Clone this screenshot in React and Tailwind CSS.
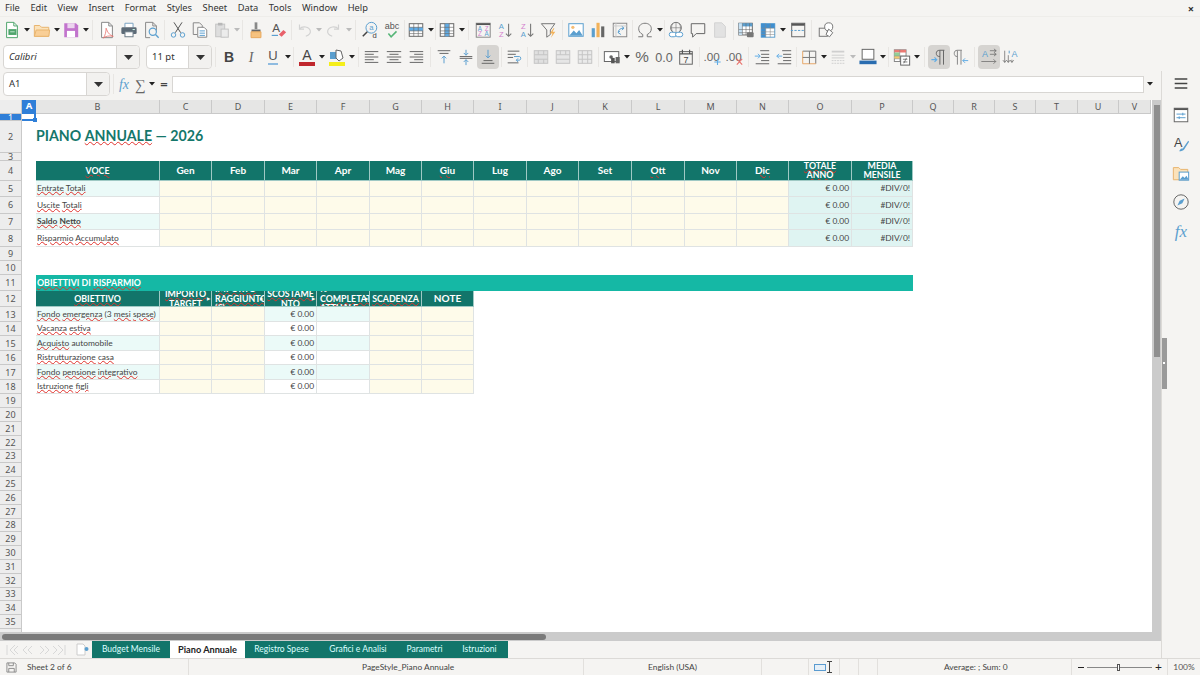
import React from "react";

const S = ({ children, size = "w-[18px] h-[18px]" }) => (
  <svg viewBox="0 0 20 20" className={size} fill="none" strokeWidth="1.1">{children}</svg>
);
const Arrow = () => (
  <svg viewBox="0 0 7 4" className="w-[6px] h-[3.500px] shrink-0"><path d="M0 0h7L3.5 4z" fill="#222" /></svg>
);
const ArrowOff = () => (
  <svg viewBox="0 0 7 4" className="w-[6px] h-[3.500px] shrink-0"><path d="M0 0h7L3.5 4z" fill="#bbb" /></svg>
);
const B = ({ children, active }) => (
  <div className={active ? "w-[22px] h-[24px] shrink-0 flex items-center justify-center rounded bg-[#d6d4d1]" : "w-[22px] h-[24px] shrink-0 flex items-center justify-center"}>{children}</div>
);
const BD = ({ children, off }) => (
  <div className="w-[29.5px] h-[24px] shrink-0 flex items-center">
    <div className="w-[22px] mr-[1px] flex justify-center">{children}</div>
    {off ? <ArrowOff /> : <Arrow />}
  </div>
);
const Sep = ({ className }) => (
  <div className={"flex justify-center shrink-0 " + className}><div className="w-px h-[20px] bg-[#e8e6e3]" /></div>
);
const T = ({ x = 10, y = 14, s = 10, c = "#555", w = "400", i, children }) => (
  <text x={x} y={y} fontSize={s} fill={c} fontWeight={w} fontStyle={i ? "italic" : "normal"} fontFamily="'Liberation Sans', sans-serif" textAnchor="middle">{children}</text>
);

const I = {
  fresh: <S><path d="M4 1.500h8l4 4v13H4z" stroke="#4fa56c" fill="#fff" /><path d="M12 1.500v4h4" stroke="#4fa56c" /><rect x="6" y="9" width="9" height="6.500" fill="#4fa56c" /><path d="M8 12h5" stroke="#bfe6cc" /></S>,
  open: <S><path d="M1.500 5h6l2 2h8v10h-16z" fill="#fbe2ba" stroke="#e8b46e" /><path d="M1.500 17l2-7h15l-1 7z" fill="#f9cf97" stroke="#e8b46e" /></S>,
  save: <S><path d="M2.500 2.500h13l2.500 2.500v13h-15.500z" fill="#c274cd" /><rect x="6" y="2.500" width="8" height="5.500" fill="#ecd5ef" /><rect x="5.500" y="11" width="9" height="7" fill="#fff" /></S>,
  pdf: <S><path d="M4 1.500h8l4 4v13H4z" stroke="#888" fill="#fff" /><path d="M12 1.500v4h4" stroke="#888" /><path d="M9 8c2 5 3 7 8 9-5-1-9 0-11 2 2-3 3-7 3-11z" stroke="#e8736e" strokeWidth=".9" /></S>,
  print: <S><path d="M5.500 7V2.500h9V7" stroke="#7aa3c2" fill="#fff" /><rect x="1.500" y="7" width="17" height="7.500" rx="1.500" fill="#5c6a76" /><rect x="5.500" y="12" width="9" height="5.500" fill="#fff" stroke="#6b7a86" /><path d="M14 9.500h2.500" stroke="#cfe" /></S>,
  preview: <S><path d="M4 1.500h8l4 4v5M9 18.500H4v-17" stroke="#888" /><path d="M12 1.500v4h4" stroke="#888" /><circle cx="12" cy="12" r="4" stroke="#5b9fcf" strokeWidth="1.300" /><path d="M15 15l3.500 3.500" stroke="#5b9fcf" strokeWidth="1.500" /></S>,
  cut: <S><path d="M5.500 1.500L13 13M14.500 1.500L7 13" stroke="#555" /><circle cx="5" cy="15.500" r="2.500" stroke="#5b9fcf" /><circle cx="15" cy="15.500" r="2.500" stroke="#5b9fcf" /></S>,
  copy: <S><path d="M2.500 2h7l3 3v4M7 15H2.500V2" stroke="#888" /><path d="M7.500 7h7l3 3v8h-10z" stroke="#888" fill="#fff" /><path d="M9.500 11h6M9.500 13.500h6M9.500 16h6" stroke="#5b9fcf" /></S>,
  paste: <S><rect x="3" y="3.500" width="10" height="14" fill="#dedede" stroke="#c4c4c4" /><rect x="5.500" y="2" width="5" height="3" fill="#b8b8b8" /><rect x="9" y="9" width="8" height="9" fill="#ececec" stroke="#c4c4c4" /></S>,
  clone: <S><path d="M8.500 1.500h3V9h-3z" fill="#888" /><path d="M5 9.500h10v2.500H5z" fill="#666" /><path d="M4.500 12h11v6.500h-11z" fill="#f6c27f" stroke="#e8a95e" /></S>,
  clear: <S><T x="8" y="12" s="13" c="#555">A</T><path d="M3 16h7" stroke="#5b9fcf" strokeWidth="1.300" /><path d="M11 15l5-5 3 2.500-5 5z" fill="#e8606a" /></S>,
  undo: <S><path d="M5 4v5h5" stroke="#d2d2d2" strokeWidth="1.300" /><path d="M5 9c3-4 11-3 12 2 .5 3-2 5-5 6" stroke="#d2d2d2" strokeWidth="1.300" /></S>,
  redo: <S><path d="M15 4v5h-5" stroke="#d2d2d2" strokeWidth="1.300" /><path d="M15 9c-3-4-11-3-12 2-.5 3 2 5 5 6" stroke="#d2d2d2" strokeWidth="1.300" /></S>,
  find: <S><circle cx="11.500" cy="7.500" r="6" stroke="#5b9fcf" /><T x="11.500" y="10.500" s="8.500" c="#5b9fcf">a</T><path d="M7 12l-5 5" stroke="#444" strokeWidth="1.700" /><T x="15" y="19" s="8.500" c="#444">d</T></S>,
  spell: <S><T x="10" y="9" s="10" c="#555">abc</T><path d="M6 14l3 3.500 6-6" stroke="#55b577" strokeWidth="1.700" /></S>,
  table: <S><rect x="2.500" y="3" width="15" height="14" stroke="#666" fill="#fff" /><rect x="2.500" y="7" width="15" height="4" fill="#62ade6" /><path d="M2.500 7h15M2.500 11h15M2.500 14h15M7.500 3v14M12.500 3v14" stroke="#666" strokeWidth=".7" /></S>,
  tablec: <S><rect x="2.500" y="3" width="15" height="14" stroke="#666" fill="#fff" /><rect x="7.500" y="3" width="5" height="14" fill="#62ade6" /><path d="M2.500 7h15M2.500 11h15M2.500 14h15M7.500 3v14M12.500 3v14" stroke="#666" strokeWidth=".7" /></S>,
  sortBox: <S><rect x="2.500" y="2.500" width="15.500" height="15.500" stroke="#888" /><path d="M2.500 3.500h15.500" stroke="#555" strokeWidth="2" /><T x="6.500" y="11" s="7" c="#5b9fcf">A</T><T x="6.500" y="17" s="7" c="#d47fce">Z</T><T x="14" y="11" s="7" c="#d47fce">Z</T><T x="14" y="17" s="7" c="#5b9fcf">A</T></S>,
  az: <S><T x="6" y="9" s="8.500" c="#5b9fcf">A</T><T x="6" y="18" s="8.500" c="#d47fce">Z</T><path d="M14 3v14M11 14l3 3 3-3" stroke="#777" strokeWidth="1.200" /></S>,
  za: <S><T x="6" y="9" s="8.500" c="#d47fce">Z</T><T x="6" y="18" s="8.500" c="#5b9fcf">A</T><path d="M14 3v14M11 14l3 3 3-3" stroke="#777" strokeWidth="1.200" /></S>,
  filter: <S><path d="M1.500 3h15l-5 7v5l-4 3v-8z" stroke="#777" /><path d="M15 8l-4 6h3l-2 5 5-7h-3l2-4z" fill="#f2b25a" /></S>,
  image: <S><rect x="2" y="3" width="16" height="14" stroke="#5b9fcf" fill="#fff" /><circle cx="6.500" cy="7" r="1.800" fill="#f5bd75" /><path d="M2.500 16.500l5-6 3 3 3-3.500 4 6.500z" fill="#5b9fcf" /></S>,
  chart: <S><rect x="3" y="8" width="3.500" height="10" fill="#5b9fcf" /><rect x="8.300" y="2" width="3.500" height="16" fill="#f2b25a" /><rect x="13.500" y="6" width="3.500" height="12" fill="#666" /></S>,
  pivot: <S><rect x="2.500" y="2.500" width="15" height="15" stroke="#888" /><path d="M2.500 5.500h15M5.500 2.500v15" stroke="#ccc" /><path d="M8 13c0-3 2-5 6-5M12 6l2.500 2L12 10M11 15l-3-2 2-2" stroke="#5b9fcf" /></S>,
  omega: <S><path d="M2.500 17.500h5v-2.500c-3-1.500-4.500-3.500-4.500-6.500 0-3.500 3-6 7-6s7 2.500 7 6c0 3-1.500 5-4.500 6.500v2.500h5" stroke="#777" /></S>,
  link: <S><circle cx="10" cy="7.500" r="6" stroke="#777" /><path d="M4 7.500h12M10 1.500v12M6.500 2.500c-2 3-2 7 0 10M13.500 2.500c2 3 2 7 0 10" stroke="#777" strokeWidth=".7" /><rect x="2.500" y="12.500" width="8" height="5" rx="2.500" stroke="#5b9fcf" fill="#fff" /><rect x="9.500" y="12.500" width="8" height="5" rx="2.500" stroke="#5b9fcf" fill="#fff" /></S>,
  comment: <S><path d="M2.500 3h15v11H8l-4 4v-4H2.500z" stroke="#666" /></S>,
  hdr: <S><path d="M4 2h8l4 4v12H4z" fill="#e2e2e2" stroke="#d2d2d2" /></S>,
  freezeP: <S><rect x="2" y="2.500" width="15" height="13" stroke="#666" fill="#fff" /><rect x="2" y="2.500" width="15" height="3.500" fill="#5b9fcf" /><rect x="2" y="2.500" width="4" height="13" fill="#c8e2f4" /><path d="M2 9.500h15M2 13h15M6 2.500v13M10 2.500v13M14 2.500v13" stroke="#666" strokeWidth=".6" /><rect x="11" y="12.500" width="7.500" height="5.500" rx="1" fill="#777" /></S>,
  freeze: <S><rect x="2.500" y="3" width="15" height="15" stroke="#5b9fcf" fill="#fff" /><rect x="2.500" y="3" width="5" height="15" fill="#3f8fd0" /><rect x="2.500" y="3" width="15" height="5" fill="#3f8fd0" /><path d="M2.500 8h15M2.500 12h15M2.500 15h15M7.500 3v15M12.500 3v15" stroke="#888" strokeWidth=".6" /></S>,
  split: <S><rect x="3" y="2.500" width="14.500" height="15" stroke="#666" /><path d="M3 4h14.500" stroke="#555" strokeWidth="2.500" /><path d="M2 10.500h16" stroke="#5b9fcf" strokeDasharray="2.500 1.500" /></S>,
  shapes: <S><rect x="2.500" y="8" width="9" height="9" stroke="#777" /><circle cx="13" cy="6.500" r="4.500" stroke="#777" fill="#fff" /><path d="M13 9l4.500 4-3.500 4.500-4-2.500z" stroke="#777" fill="#fff" /></S>,
  aLeft: <S><path d="M2 4h15M2 7h10M2 10h15M2 13h10M2 16h15" stroke="#666" /></S>,
  aCenter: <S><path d="M2 4h16M5 7h10M2 10h16M5 13h10M2 16h16" stroke="#666" /></S>,
  aRight: <S><path d="M3 4h15M8 7h10M3 10h15M8 13h10M3 16h15" stroke="#666" /></S>,
  vTop: <S><path d="M3 3h14M5 6h10" stroke="#666" /><path d="M10 17V9M7.500 11.500L10 9l2.500 2.500" stroke="#5b9fcf" /></S>,
  vMid: <S><path d="M3 9.500h14M3 11.500h14" stroke="#666" /><path d="M10 2v6M7.500 5.500L10 8l2.500-2.500M10 19v-6M7.500 15.500L10 13l2.500 2.500" stroke="#5b9fcf" /></S>,
  vBot: <S><path d="M3 17h14M5 14h10" stroke="#666" /><path d="M10 2v9M7.500 8.500L10 11l2.500-2.500" stroke="#5b9fcf" /></S>,
  wrap: <S><path d="M3 3.500h13M3 7h9M3 10.500h6M3 16.500h12" stroke="#666" /><path d="M10 9.500h6c2 0 2 4 0 4h-3M14.500 11.500L12.500 13.500l2 2" stroke="#5b9fcf" /></S>,
  merge1: <S><rect x="2.500" y="3" width="15" height="14" fill="#e0e0e0" stroke="#c4c4c4" /><path d="M2.500 7.500h15M2.500 12.500h15M7 3v4.500M13 3v4.500M7 12.500V17M13 12.500V17" stroke="#c4c4c4" /></S>,
  merge2: <S><rect x="2.500" y="3" width="15" height="14" fill="#e6e6e6" stroke="#c4c4c4" /><path d="M2.500 7.500h15M2.500 12.500h15M7 3v4.500M13 3v4.500" stroke="#c4c4c4" /></S>,
  merge3: <S><rect x="2.500" y="3" width="15" height="14" fill="#eaeaea" stroke="#c4c4c4" /><path d="M2.500 7.500h15M2.500 12.500h15M7 3v14M13 3v14" stroke="#c4c4c4" /></S>,
  curr: <S><rect x="1.500" y="4" width="16" height="11" stroke="#666" fill="#fff" /><circle cx="9" cy="10" r="2" fill="#666" /><rect x="9" y="11" width="4" height="6" fill="#555" /><rect x="14" y="10" width="4.500" height="7" fill="#666" /></S>,
  pct: <S><T x="10" y="16" s="17" c="#666">%</T></S>,
  num: <S><T x="10" y="16" s="14" c="#666">0.0</T></S>,
  date: <S><rect x="3" y="4" width="14" height="14" stroke="#666" /><path d="M3 6.500h14M6 2v4M14 2v4" stroke="#555" strokeWidth="1.300" /><T x="10" y="16.500" s="10" c="#444">7</T></S>,
  addDec: <S><T x="8.500" y="14" s="13" c="#666">.00</T><path d="M15 12v7M11.500 15.500h7" stroke="#62ade6" strokeWidth="1.200" /></S>,
  delDec: <S><T x="8.500" y="14" s="13" c="#666">.00</T><path d="M12 12l6 6.500M18 12l-6 6.500" stroke="#e8706a" strokeWidth="1.200" /></S>,
  indent: <S><path d="M8 3h10M9 7h9M9 10.500h9M9 14h9M3 17.500h15" stroke="#666" /><path d="M2 9h6M5.500 6.500L8 9l-2.500 2.500" stroke="#62ade6" /></S>,
  outdent: <S><path d="M8 3h10M9 7h9M9 10.500h9M9 14h9M3 17.500h15" stroke="#666" /><path d="M8 9H2M4.500 6.500L2 9l2.500 2.500" stroke="#62ade6" /></S>,
  borders: <S><path d="M3 3.500h14.500v14" stroke="#777" /><path d="M3 3.500v14h14.500" stroke="#e8a868" /><path d="M3 10.500h14.500M10.500 3.500v14" stroke="#777" /></S>,
  bstyle: <S><path d="M3 4h14" stroke="#cfcfcf" strokeWidth="2" /><path d="M3 8h14M3 11h14" stroke="#cfcfcf" /><path d="M3 14h14M3 17h14" stroke="#cfcfcf" strokeDasharray="2 1" /></S>,
  bcolor: <S><rect x="3.500" y="1.500" width="13" height="11" stroke="#666" fill="#fff" /><path d="M.500 14h19v4h-19z" fill="#2a6db0" /></S>,
  cond: <S><rect x="1.500" y="2" width="13" height="13" stroke="#888" fill="#fff" /><rect x="1.500" y="2" width="13" height="3" fill="#ea7a74" /><rect x="1.500" y="5" width="6" height="4" fill="#92cf95" /><rect x="1.500" y="9" width="6" height="3" fill="#f4cc70" /><path d="M1.500 9h13M1.500 12h13M7.500 2v13" stroke="#888" strokeWidth=".6" /><rect x="8.500" y="9" width="10" height="10" fill="#fff" stroke="#666" /><path d="M11 12.500h5M11 15.500h5M15 11l-3 6" stroke="#555" strokeWidth=".8" /></S>,
  ltr: <S><path d="M16 2.500H11c-3 0-4 1.500-4 3.500s1 3.500 4 3.500M11 2.500v16M15 2.500v16" stroke="#666" /><path d="M1.500 13h6M5 10.500L7.500 13 5 15.500" stroke="#62ade6" strokeWidth="1.300" /></S>,
  rtl: <S><path d="M11 2.500H6c-2.500 0-3.500 1.500-3.500 3.500S3.500 9.500 6 9.500M6 2.500v16M10 2.500v16" stroke="#888" /><path d="M18 14h-6M14.500 11.500L12 14l2.500 2.500" stroke="#62ade6" strokeWidth="1.100" /></S>,
  txtH: <S><T x="5.500" y="10" s="10" c="#5b9fcf">A</T><path d="M11 3h7M11 7h7M15.500 1l2.500 2-2.500 2M15.500 5l2.500 2-2.500 2M1.500 15h16M15 12.500l2.500 2.500-2.500 2.500" stroke="#666" strokeWidth=".8" /></S>,
  txtV: <S><T x="14" y="10" s="10" c="#5b9fcf">A</T><path d="M3 3v13M7 8v8M11 13v3M1 13.500L3 16l2-2.500M5 13.500L7 16l2-2.500M9 13.500L11 16l2-2.500" stroke="#666" strokeWidth=".8" /><path d="M8 3v3" stroke="#5b9fcf" /></S>,
  menu: <S><path d="M3 4.500h14M3 9.500h14M3 14.500h14" stroke="#444" strokeWidth="1.700" /></S>,
  props: <S><rect x="2.500" y="2.500" width="15" height="15" stroke="#666" fill="#fff" /><path d="M2.500 3.500h15" stroke="#555" strokeWidth="2" /><path d="M5 9h10M5 13h10M12 7.500v3M8 11.500v3" stroke="#5b9fcf" /></S>,
  styles: <S><T x="7" y="13" s="14" c="#444">A</T><path d="M8 18c1-3 3-3 4-3l6-8.500 1 1-5.500 8.500c-1 1-3 2-5.500 2z" fill="#5b9fcf" /></S>,
  gallery: <S><path d="M1.500 4h6l2 2h8v11.500h-16z" fill="#fbe2ba" stroke="#e8b46e" /><rect x="8" y="9" width="10.500" height="9" fill="#fff" stroke="#5b9fcf" /><path d="M8.500 17.500l3.500-4 2 2 2-2.500 2.500 4.500z" fill="#5b9fcf" /></S>,
  nav: <S><circle cx="10" cy="10" r="8" stroke="#666" /><path d="M14 6l-2.500 5.500L6 14l2.500-5.500z" fill="#5b9fcf" /></S>,
};

const Bold = () => <div className="font-['Liberation_Sans'] font-bold text-[14px] text-[#444]">B</div>;

const topItems = (
  <div className="h-[26px] flex items-center pl-[1px] shrink-0">
    <BD>{I.fresh}</BD><BD>{I.open}</BD><BD>{I.save}</BD><Sep className="w-[6.500px]" />
    <B>{I.pdf}</B><B>{I.print}</B><B>{I.preview}</B><Sep className="w-[5px]" />
    <B>{I.cut}</B><B>{I.copy}</B><BD off>{I.paste}</BD><Sep className="w-[4.500px]" />
    <B>{I.clone}</B><B>{I.clear}</B><Sep className="w-[4px]" />
    <BD off>{I.undo}</BD><BD off>{I.redo}</BD><Sep className="w-[7px]" />
    <B>{I.find}</B><B>{I.spell}</B><Sep className="w-[2px]" />
    <BD>{I.table}</BD><Sep className="w-[1.500px]" /><BD>{I.tablec}</BD><Sep className="w-[6px]" />
    <B>{I.sortBox}</B><B>{I.az}</B><B>{I.za}</B><B>{I.filter}</B><Sep className="w-[5px]" />
    <B>{I.image}</B><B>{I.chart}</B><B>{I.pivot}</B><Sep className="w-[3px]" />
    <BD>{I.omega}</BD><Sep className="w-[2px]" /><B>{I.link}</B><B>{I.comment}</B><B>{I.hdr}</B><Sep className="w-[4px]" />
    <B>{I.freezeP}</B><BD>{I.freeze}</BD><B>{I.split}</B><Sep className="w-[6px]" />
    <B>{I.shapes}</B>
  </div>
);

const Combo = ({ text, cls, dd, italic }) => (
  <div className={"h-[24px] shrink-0 flex items-stretch rounded border border-[#d8d6d3] bg-white " + cls}>
    <div className={"flex-1 flex items-center pl-[5px] text-[9.500px] text-[#333] font-['Noto_Sans'] " + (italic ? "italic" : "")}>{text}</div>
    <div className={"flex items-center justify-center border-l border-[#d8d6d3] bg-[#f2f1ef] rounded-r " + dd}>
      <svg viewBox="0 0 9 5" className="w-[9px] h-[5px]"><path d="M0 0h9L4.500 5z" fill="#333" /></svg>
    </div>
  </div>
);

const formatItems = (
  <div className="h-[28px] flex items-center pl-[3px] shrink-0">
    <Combo text="Calibri" italic cls="w-[137px]" dd="w-[23px]" />
    <div className="w-[6px] shrink-0" />
    <Combo text="11 pt" cls="w-[66px]" dd="w-[23px]" />
    <Sep className="w-[6px]" />
    <B><Bold /></B>
    <B><div className="font-['Liberation_Serif'] italic text-[14px] text-[#666]">I</div></B>
    <BD><div className="font-['Liberation_Sans'] text-[13px] text-[#555] border-b-2 border-[#8fbbe0] leading-[14px]">U</div></BD>
    <Sep className="w-[4.500px]" />
    <BD><div className="flex flex-col items-center w-[16px]"><div className="font-['Liberation_Sans'] text-[14px] leading-[14px] text-[#444]">A</div><div className="w-[16px] h-[4px] bg-[#c0272d]" /></div></BD>
    <BD><div className="flex flex-col items-center w-[16px]"><svg viewBox="0 0 16 13" className="w-[16px] h-[13px]"><rect x="1" y="3" width="7" height="7" fill="#5b9fcf" /><path d="M7 1l5 1 2 7-4 3-3-3z" fill="#fff" stroke="#666" /></svg><div className="w-[16px] h-[4px] bg-[#f5ee1a]" /></div></BD>
    <Sep className="w-[6px]" />
    <B>{I.aLeft}</B><B>{I.aCenter}</B><B>{I.aRight}</B><Sep className="w-[6px]" />
    <B>{I.vTop}</B><B>{I.vMid}</B><B active>{I.vBot}</B><Sep className="w-[4px]" />
    <B>{I.wrap}</B><Sep className="w-[5px]" />
    <B>{I.merge1}</B><B>{I.merge2}</B><B>{I.merge3}</B><Sep className="w-[5px]" />
    <BD>{I.curr}</BD>
    <B>{I.pct}</B><B>{I.num}</B><B>{I.date}</B><Sep className="w-[5px]" />
    <B>{I.addDec}</B><B>{I.delDec}</B><Sep className="w-[5px]" />
    <B>{I.indent}</B><B>{I.outdent}</B><Sep className="w-[3px]" />
    <BD>{I.borders}</BD><BD off>{I.bstyle}</BD><BD>{I.bcolor}</BD><Sep className="w-[5px]" />
    <BD>{I.cond}</BD><Sep className="w-[7px]" />
    <B active>{I.ltr}</B><B>{I.rtl}</B><Sep className="w-[6px]" />
    <B active>{I.txtH}</B><B>{I.txtV}</B>
  </div>
);

const W = ({ children }) => <span className="underline decoration-wavy decoration-[#e0322c] decoration-1 underline-offset-[0px]">{children}</span>;

const colNames = ["B", "C", "D", "E", "F", "G", "H", "I", "J", "K", "L", "M", "N", "O", "P", "Q", "R", "S", "T", "U", "V"];
const RH = ({ n, active }) => (
  <div className={active
    ? "col-start-1 flex items-center justify-center bg-[#2f7fd8] text-white text-[9px] leading-none border-b border-r border-[#c9c9c9] overflow-hidden font-['Noto_Sans']"
    : "col-start-1 flex items-center justify-center bg-[#ededed] text-[#555] text-[9px] leading-none border-b border-r border-[#c9c9c9] overflow-hidden font-['Noto_Sans']"}>{n}</div>
);
const HC = ({ children, cls = "" }) => (
  <div className={"relative overflow-hidden flex flex-col items-center justify-center text-center bg-[#12756a] text-white font-bold text-[8.800px] leading-[9.500px] border-r border-b border-[#9fc9c4] font-['Lato'] " + cls}>{children}</div>
);
const cx = "flex items-center border-r border-b border-[#dfe3e3] text-[8.400px] text-[#444] font-['Lato'] overflow-hidden whitespace-nowrap ";
const Label = ({ tint, bold, children }) => (
  <div className={"col-start-3 pl-[1px] " + cx + (tint ? "bg-[#ebfaf8] " : "bg-white ") + (bold ? "font-bold" : "")}><span>{children}</span></div>
);
const Cream = () => <div className={cx + "bg-[#fefbea]"} />;
const Tint = ({ tint, children }) => <div className={"justify-end pr-[2px] " + cx + (tint ? "bg-[#ebfaf8]" : "bg-white")}>{children}</div>;
const Sum = ({ children }) => <div className={"justify-end pr-[2px] " + cx + "bg-[#dff4f2]"}>{children}</div>;
const Over = () => <span className="absolute right-[1px] top-[6px] text-[4px] leading-none text-white">▶</span>;

const months = ["Gen", "Feb", "Mar", "Apr", "Mag", <W>Giu</W>, "Lug", "Ago", "Set", <W>Ott</W>, "Nov", <W>Dic</W>];
const annual = [
  [<><W>Entrate</W> <W>Totali</W></>, true, false],
  [<><W>Uscite</W> <W>Totali</W></>, false, false],
  [<><W>Saldo</W> <W>Netto</W></>, true, true],
  [<><W>Risparmio</W> <W>Accumulato</W></>, false, false],
];
const goals = [
  <><W>Fondo</W> <W>emergenza</W> (3 <W>mesi</W> <W>spese</W>)</>,
  <><W>Vacanza</W> <W>estiva</W></>,
  <><W>Acquisto</W> automobile</>,
  <><W>Ristrutturazione</W> <W>casa</W></>,
  <><W>Fondo</W> <W>pensione</W> <W>integrativo</W></>,
  <><W>Istruzione</W> <W>figli</W></>,
];

const Sheet = () => (
  <div className="w-[1152px] overflow-hidden bg-white grid grid-cols-[22px_14px_124px_52px_53px_52px_53px_52px_52px_53px_52px_53px_53px_52px_52px_63px_61px_41px_41px_41px_42px_41px_32px] grid-rows-[14px_7px_32px_8px_19.500px_repeat(4,16.600px)_14px_14px_16px_16.500px_repeat(6,14.500px)_repeat(17,13.800px)_3px]">
    <div className="col-start-1 bg-[#ededed] border-b border-r border-[#c9c9c9]" />
    <div className="bg-[#2f7fd8] text-white font-bold text-[9.500px] flex items-center justify-center border-b border-[#2f7fd8] font-['Noto_Sans']">A</div>
    {colNames.map((c) => (
      <div key={c} className="bg-[#e6e6e5] text-[#555] text-[9px] flex items-center justify-center border-r border-b border-[#c9c9c9] font-['Noto_Sans']">{c}</div>
    ))}

    <RH n="1" active />
    <div className="relative col-start-2 border-2 border-[#2f7fd8] border-t-0 border-l-0">
      <div className="absolute right-[-3px] bottom-[-3px] w-[4px] h-[4px] bg-[#2f7fd8]" />
    </div>

    <RH n="2" />
    <div className="col-start-3 col-span-6 flex items-center pb-[2px] text-[14.200px] font-bold text-[#15776b] font-['Lato'] whitespace-nowrap">PIANO&nbsp;<W>ANNUALE</W>&nbsp;— 2026</div>

    <RH n="3" />

    <RH n="4" />
    <HC cls="col-start-3"><W>VOCE</W></HC>
    {months.map((m, i) => <HC key={i} cls="text-[10px]">{m}</HC>)}
    <HC><W>TOTALE</W><W>ANNO</W></HC>
    <HC>MEDIA<W>MENSILE</W></HC>

    {annual.map(([label, tint, bold], i) => (
      <React.Fragment key={i}>
        <RH n={5 + i} />
        <Label tint={tint} bold={bold}>{label}</Label>
        {months.map((_, j) => <Cream key={j} />)}
        <Sum>€ 0.00</Sum>
        <Sum>#DIV/0!</Sum>
      </React.Fragment>
    ))}

    <RH n="9" />
    <RH n="10" />
    <RH n="11" />
    <div className="col-start-3 col-span-15 flex items-center pl-[1px] bg-[#15b8a5] text-white font-bold text-[8.800px] font-['Lato'] whitespace-nowrap"><W>OBIETTIVI</W>&nbsp;DI&nbsp;<W>RISPARMIO</W></div>

    <RH n="12" />
    <HC cls="col-start-3"><W>OBIETTIVO</W></HC>
    <HC><W>IMPORTO</W><W>TARGET</W><Over /></HC>
    <HC cls="whitespace-nowrap !items-start pl-[3px]"><W>IMPORTO</W><W>RAGGIUNTO</W><span>(€)</span><Over /></HC>
    <HC><W>SCOSTAME</W><W>NTO</W><Over /></HC>
    <HC cls="whitespace-nowrap !items-start pl-[3px]"><span>%</span><W>COMPLETATO</W><span>ATTUALE</span><Over /></HC>
    <HC><W>SCADENZA</W></HC>
    <HC cls="text-[10px]">NOTE</HC>

    {goals.map((g, i) => (
      <React.Fragment key={i}>
        <RH n={13 + i} />
        <Label tint={i % 2 === 0}>{g}</Label>
        <Cream /><Cream />
        <Tint tint={i % 2 === 0}>€ 0.00</Tint>
        <Tint tint={i % 2 === 0} />
        <Cream /><Cream />
      </React.Fragment>
    ))}

    {Array.from({ length: 17 }, (_, i) => <RH key={i} n={19 + i} />)}
    <div className="col-start-1 bg-[#ededed] border-r border-[#c9c9c9]" />
  </div>
);

const tabs = ["Budget Mensile", "Piano Annuale", "Registro Spese", "Grafici e Analisi", "Parametri", "Istruzioni"];
const tabCls = [
  "w-[78px] bg-[#12756a] text-[#dff] text-[8.500px]",
  "w-[75px] bg-white text-[#222] font-bold text-[9.200px]",
  "w-[73px] bg-[#12756a] text-[#dff] text-[8.500px]",
  "w-[80px] bg-[#12756a] text-[#dff] text-[8.500px]",
  "w-[53px] bg-[#12756a] text-[#dff] text-[8.500px]",
  "w-[57px] bg-[#12756a] text-[#dff] text-[8.500px]",
];

const Status = () => (
  <div className="h-[17px] shrink-0 flex items-stretch bg-[#f5f4f2] border-t border-[#dcdad7] text-[8.400px] text-[#444] font-['Lato']">
    <div className="w-[22px] flex items-center justify-center">
      <svg viewBox="0 0 12 12" className="w-[11px] h-[11px]" fill="none"><path d="M1 1h8.500L11 2.500V11H1z" stroke="#888" /><path d="M3 1v3h5V1M3 11V7h6v4" stroke="#888" /></svg>
    </div>
    <div className="w-[166px] flex items-center pl-[5px]">Sheet 2 of 6</div>
    <div className="w-[395px] border-l border-[#e2e0dd] flex items-center pl-[173px]">PageStyle_Piano Annuale</div>
    <div className="w-[178px] border-l border-[#e2e0dd] flex items-center justify-center">English (USA)</div>
    <div className="w-[47px] border-l border-[#e2e0dd]" />
    <div className="w-[31px] border-l border-[#e2e0dd] flex items-center pl-[5px] gap-[1px]">
      <div className="w-[12px] h-[7px] border border-[#5a9bd0] bg-[#e6f0f8]" />
      <svg viewBox="0 0 5 12" className="w-[5px] h-[12px]" fill="none"><path d="M0 .500h5M0 11.500h5M2.500 .500v11" stroke="#444" /></svg>
    </div>
    <div className="w-[19px] border-l border-[#e2e0dd]" />
    <div className="w-[19px] border-l border-[#e2e0dd]" />
    <div className="w-[194px] border-l border-[#e2e0dd] flex items-center pl-[66px] whitespace-nowrap">Average: ; Sum: 0</div>
    <div className="w-[96px] border-l border-[#e2e0dd] flex items-center pl-[6px] gap-[3px] relative">
      <div className="w-[6px] h-px bg-[#222]" />
      <div className="relative w-[65px] h-px bg-[#888]">
        <div className="absolute left-[30px] top-[-3px] w-[3px] h-[7px] border border-[#555] bg-white" />
      </div>
      <div className="text-[12px] leading-none text-[#222]">+</div>
    </div>
    <div className="flex-1 border-l border-[#e2e0dd] flex items-center justify-center text-[#555]">100%</div>
  </div>
);

export default function App() {
  return (
    <div className="w-[1200px] h-[675px] overflow-hidden flex flex-col bg-[#f5f4f2] relative font-['Noto_Sans']">
      <div className="h-[17px] shrink-0 flex items-center pl-[5px] pr-[6px] gap-[10.500px] text-[9.300px] text-[#333] border-b border-[#eeedea]">
        {["File", "Edit", "View", "Insert", "Format", "Styles", "Sheet", "Data", "Tools", "Window", "Help"].map((m) => <span key={m}>{m}</span>)}
        <span className="ml-auto text-[11px] font-bold text-[#333] leading-none">×</span>
      </div>
      {topItems}
      {formatItems}

      <div className="flex-1 min-h-0 flex">
        <div className="w-[1161px] shrink-0 flex flex-col">
          <div className="h-[26px] shrink-0 flex items-center pl-[3px]">
            <Combo text="A1" cls="w-[107px]" dd="w-[23px]" />
            <Sep className="w-[6px]" />
            <div className="w-[16px] mr-[1px] text-center font-['Liberation_Serif'] italic text-[14px] text-[#5b9fcf]">fx</div>
            <div className="w-[14px] text-center text-[15px] text-[#666] leading-none">∑</div>
            <div className="mx-[2px]"><Arrow /></div>
            <div className="w-[12px] ml-[1px] text-center text-[13px] text-[#444] font-bold leading-none">=</div>
            <div className="ml-[2px] w-[972px] h-[17px] bg-white border border-[#d8d6d3]" />
            <div className="ml-[3px]"><Arrow /></div>
          </div>
          <div className="h-[3px] shrink-0" />
          <div className="flex h-[532px] shrink-0">
            <Sheet />
            <div className="w-[9px] bg-[#cbcbcb] flex justify-center">
              <div className="w-[6px] h-[252px] mt-[5px] bg-[#8f8f8f]" />
            </div>
          </div>
          <div className="h-[9px] shrink-0 bg-[#cbcbcb] flex items-center pl-[2px]">
            <div className="w-[544px] h-[6px] rounded-full bg-[#7a7a7a]" />
          </div>
          <div className="h-[17px] shrink-0 flex items-stretch font-['Lato']">
            <div className="w-[73px] flex items-center pl-[6px]">
              <svg viewBox="0 0 60 12" className="w-[60px] h-[12px]" fill="none" stroke="#d8d8d8"><path d="M1 1v10M9 1L4 6l5 5M12 2L8 6l4 4M21 2l-4 4 4 4M26 2l-4 4 4 4M34 2l4 4-4 4M39 2l4 4-4 4M47 2l4 4-4 4M52 1l5 5-5 5M59 1v10" /></svg>
            </div>
            <div className="w-[19px] flex items-center justify-center">
              <svg viewBox="0 0 14 13" className="w-[14px] h-[13px]" fill="none"><path d="M1 1h6l2 2v9H1z" fill="#fff" stroke="#ccc" /><circle cx="10.500" cy="6" r="2" fill="#5b9fcf" /></svg>
            </div>
            {tabs.map((t, i) => (
              <div key={t} className={"flex items-center justify-center whitespace-nowrap " + tabCls[i]}>{t}</div>
            ))}
          </div>
        </div>
        <div className="relative flex-1 border-l border-[#dcdad7] flex flex-col items-center pt-[3px]">
          <div className="absolute left-0 top-[267px] w-[5px] h-[51px] bg-[#9a9a9a]">
            <div className="absolute left-[1px] top-[24px] w-[2px] h-[2px] bg-white" />
          </div>
          <div className="h-[20px] flex items-center mb-[12px]">{I.menu}</div>
          <div className="flex flex-col items-center gap-[11px]">
            {I.props}{I.styles}{I.gallery}{I.nav}
            <div className="font-['Liberation_Serif'] italic text-[17px] leading-[20px] text-[#5b9fcf]">fx</div>
          </div>
        </div>
      </div>
      <Status />
    </div>
  );
}
